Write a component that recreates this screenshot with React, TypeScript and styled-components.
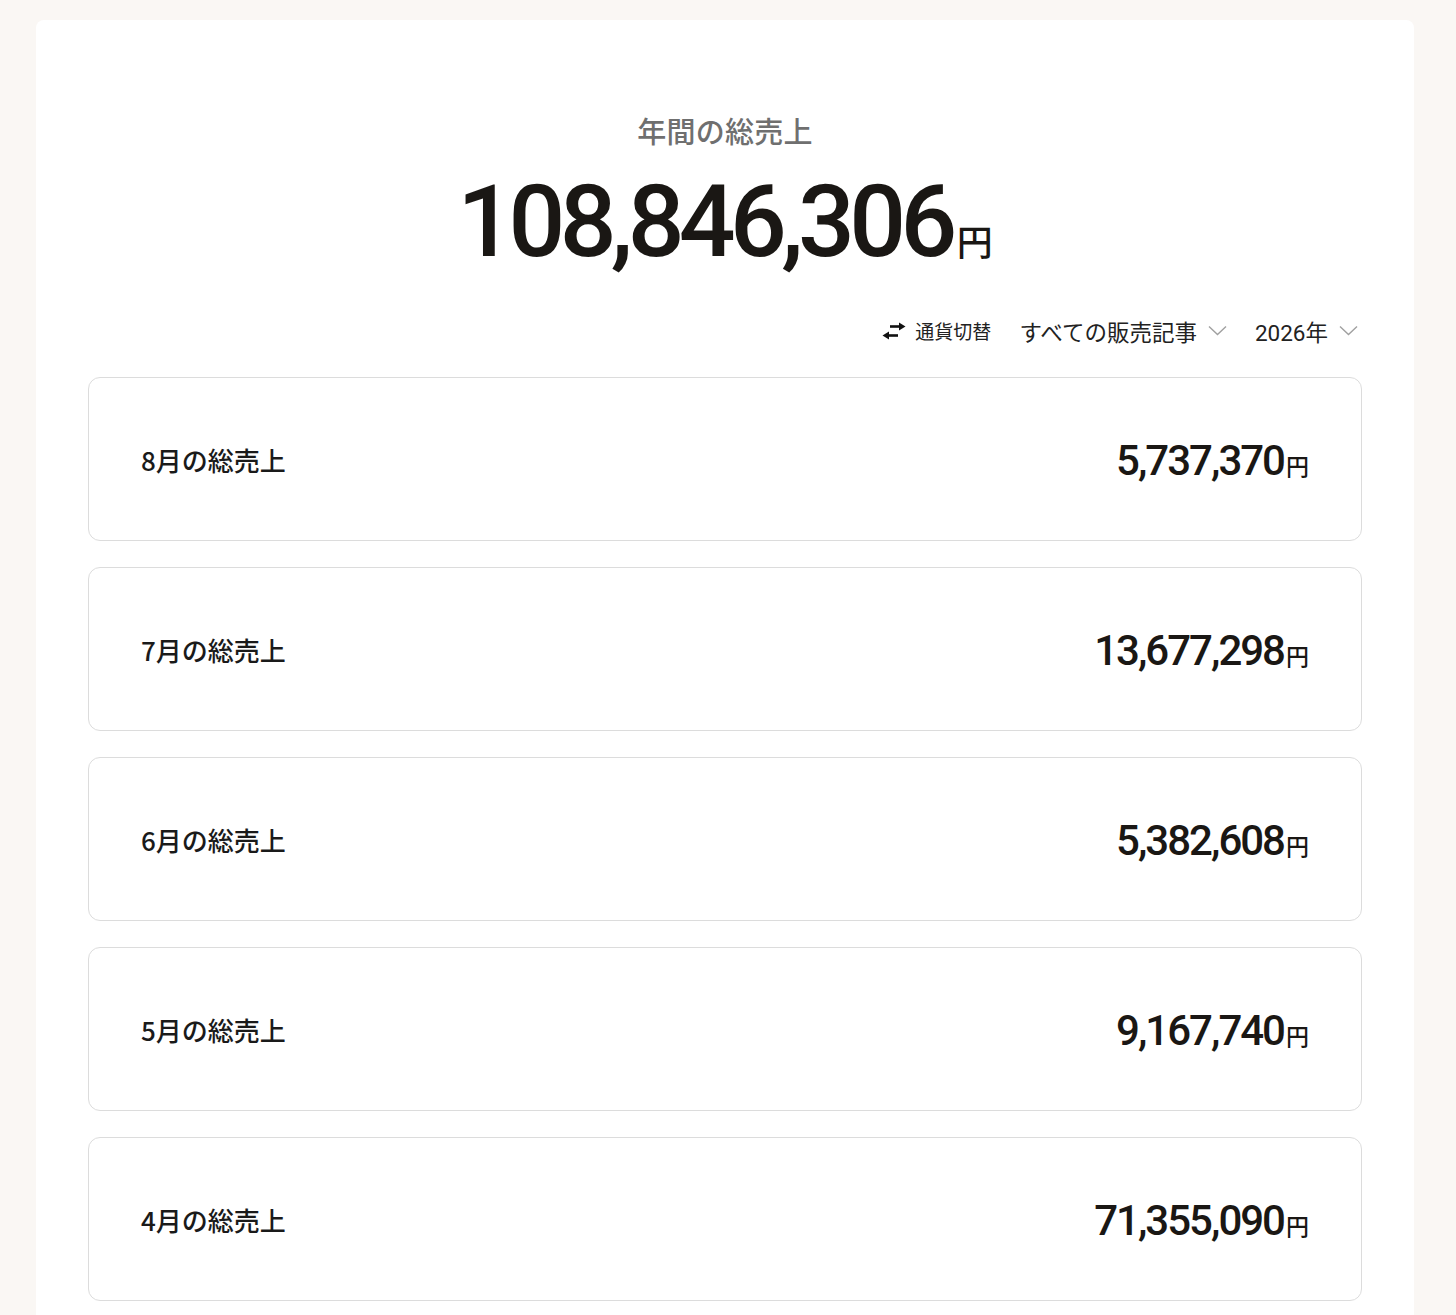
import React from "react";
import styled, { createGlobalStyle } from "styled-components";

const GlobalStyle = createGlobalStyle`
  html, body {
    margin: 0;
    padding: 0;
    background: #faf7f4;
  }
  body {
    font-family: "Noto Sans CJK JP", "Noto Sans", sans-serif;
    color: #1a1a1a;
  }
  * { box-sizing: border-box; }
`;

const Page = styled.div`
  padding: 20px 42px 0 36px;
  min-height: 1315px;
`;

const Panel = styled.main`
  background: #ffffff;
  border-radius: 8px 8px 0 0;
  padding: 90px 52px 40px;
  display: flex;
  flex-direction: column;
  min-height: 1295px;
`;

const Title = styled.h2`
  margin: 0;
  text-align: center;
  font-size: 29px;
  line-height: 40px;
  font-weight: 500;
  color: #6f6f6f;
  letter-spacing: 0.01em;
`;

const Total = styled.div`
  margin-top: 22px;
  text-align: center;
  font-family: Roboto, "Noto Sans CJK JP", sans-serif;
  font-size: 100px;
  line-height: 100px;
  font-weight: 500;
  letter-spacing: -5.6px;
  color: #1a1714;
`;

const Yen = styled.span<{ $size: number }>`
  font-family: "Noto Sans CJK JP", sans-serif;
  font-size: ${(p) => p.$size}px;
  font-weight: 500;
  letter-spacing: 0;
  margin-left: ${(p) => (p.$size > 30 ? 5 : 2)}px;
`;

const Controls = styled.div`
  margin-top: 24px;
  display: flex;
  justify-content: flex-end;
  align-items: center;
  gap: 28px;
  padding-right: 4px;
  height: 33px;
`;

const SwapButton = styled.button`
  display: flex;
  align-items: center;
  gap: 9px;
  border: none;
  background: none;
  padding: 0;
  font-family: "Noto Sans CJK JP", sans-serif;
  font-size: 19px;
  color: #222;
  cursor: pointer;
`;

const Select = styled.button`
  display: flex;
  align-items: center;
  gap: 11px;
  border: none;
  background: none;
  padding: 0;
  font-family: Roboto, "Noto Sans CJK JP", sans-serif;
  font-size: 22.5px;
  color: #222;
  cursor: pointer;
`;

const List = styled.div`
  margin-top: 30px;
  display: flex;
  flex-direction: column;
  gap: 26px;
`;

const Card = styled.section`
  height: 164px;
  border: 1px solid #dcdcdc;
  border-radius: 12px;
  padding: 0 52px 0 52px;
  display: flex;
  align-items: center;
  justify-content: space-between;
`;

const Label = styled.span`
  font-size: 26px;
  font-weight: 500;
  color: #1a1a1a;
`;

const Amount = styled.span`
  font-family: Roboto, "Noto Sans CJK JP", sans-serif;
  font-size: 42px;
  font-weight: 500;
  letter-spacing: -2px;
  color: #1a1714;
  line-height: 1;
  margin-top: 4px;
`;

const SwapIcon = () => (
  <svg width="24" height="20" viewBox="0 0 24 20" aria-hidden>
    <line x1="8" y1="5.5" x2="18" y2="5.5" stroke="#111" strokeWidth="2.6" />
    <polygon points="17,1.5 23.5,5.5 17,9.5" fill="#111" />
    <line x1="6" y1="14.5" x2="16" y2="14.5" stroke="#111" strokeWidth="2.6" />
    <polygon points="7,10.5 0.5,14.5 7,18.5" fill="#111" />
  </svg>
);

const Chevron = () => (
  <svg width="19" height="11" viewBox="0 0 19 11" aria-hidden>
    <polyline
      points="1,1.5 9.5,9.5 18,1.5"
      fill="none"
      stroke="#a0a0a0"
      strokeWidth="1.4"
    />
  </svg>
);

const months = [
  { label: "8月の総売上", value: "5,737,370" },
  { label: "7月の総売上", value: "13,677,298" },
  { label: "6月の総売上", value: "5,382,608" },
  { label: "5月の総売上", value: "9,167,740" },
  { label: "4月の総売上", value: "71,355,090" },
];

export default function App() {
  return (
    <>
      <GlobalStyle />
      <Page>
        <Panel>
          <Title>年間の総売上</Title>
          <Total>
            108,846,306<Yen $size={36}>円</Yen>
          </Total>
          <Controls>
            <SwapButton>
              <SwapIcon />
              通貨切替
            </SwapButton>
            <Select>
              すべての販売記事
              <Chevron />
            </Select>
            <Select>
              2026年
              <Chevron />
            </Select>
          </Controls>
          <List>
            {months.map((m) => (
              <Card key={m.label}>
                <Label>{m.label}</Label>
                <Amount>
                  {m.value}
                  <Yen $size={23}>円</Yen>
                </Amount>
              </Card>
            ))}
          </List>
        </Panel>
      </Page>
    </>
  );
}
